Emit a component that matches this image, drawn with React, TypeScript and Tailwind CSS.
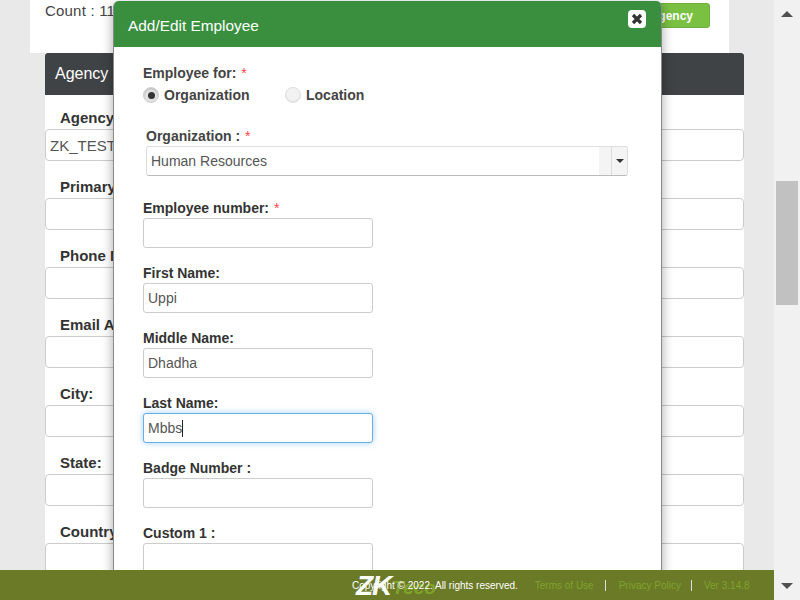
import React from "react";

const font = { fontFamily: '"Liberation Sans", Arial, sans-serif' };

function BgRow({ label, value }: { label: string; value?: string }) {
  return (
    <div className="h-[69px]">
      <div className="h-[25px] pl-[15px] pt-[14px] text-[15px] leading-[17px] font-bold text-[#333] whitespace-nowrap">{label}</div>
      <div className="h-[32px] mt-[9px] border border-[#ccc] rounded-[4px] bg-white pl-[4px] text-[15px] leading-[31px] text-[#555]">{value}</div>
    </div>
  );
}

function Field({ label, value, focus, caret }: { label: string; value?: string; focus?: boolean; caret?: boolean }) {
  return (
    <div className="h-[65px]">
      <div className="h-[18px] text-[14px] leading-[16px] font-bold text-[#333] whitespace-nowrap">{label}</div>
      <div className={`w-[230px] h-[30px] rounded-[3px] bg-white pl-[4px] text-[14px] leading-[28px] text-[#555] border flex items-center ${focus ? "border-[#66afe9] shadow-[0_0_6px_rgba(102,175,233,0.6)]" : "border-[#ccc]"}`}>
        {value}
        {caret && <span className="inline-block w-px h-[17px] bg-[#222]" />}
      </div>
    </div>
  );
}

function Radio({ checked, label, gap }: { checked?: boolean; label: string; gap: string }) {
  return (
    <div className={`flex items-center gap-[5px] ${gap}`}>
      <span className={`w-[16px] h-[16px] rounded-full border flex items-center justify-center ${checked ? "bg-[#e2e2e2] border-[#cfcfcf] shadow-[inset_0_1px_2px_rgba(0,0,0,0.2)]" : "bg-[#f2f2f2] border-[#ddd] shadow-[inset_0_-1px_1px_rgba(0,0,0,0.08)]"}`}>
        {checked && <span className="w-[7px] h-[7px] rounded-full bg-[#333]" />}
      </span>
      <span className="text-[14px] font-bold text-[#444]">{label}</span>
    </div>
  );
}

export default function App() {
  return (
    <div style={font} className="flex w-[800px] h-[600px] overflow-hidden bg-[#e9e9e9]">
      <div className="w-[774px] h-[600px] flex flex-col">
        <div className="relative h-[570px] overflow-hidden">
          <div className="ml-[30px] w-[699px] h-[53px] bg-white pl-[15px] flex justify-between">
            <div className="text-[15px] leading-[17px] pt-[2px] text-[#444] tracking-[0.2px]">Count : 11</div>
            <div className="mt-[3px] mr-[19px] h-[25px] w-[100px] rounded-[3px] bg-[#7ac143] border border-[#6fae3c] text-white text-[12px] leading-[24px] font-bold text-right pr-[16px]">Add Agency</div>
          </div>
          <div className="ml-[45px] w-[699px] bg-white">
            <div className="h-[42px] bg-[#3f4346] rounded-t-[3px] pl-[10px] text-white text-[16px] leading-[42px]">Agency Details</div>
            <BgRow label="Agency Name:" value="ZK_TEST" />
            <BgRow label="Primary Contact:" />
            <BgRow label="Phone Number:" />
            <BgRow label="Email Address:" />
            <BgRow label="City:" />
            <BgRow label="State:" />
            <BgRow label="Country:" />
          </div>

          <div className="absolute left-[113px] top-[1px] w-[549px] h-[640px] bg-white rounded-t-[6px] border-x border-[#8a8a8a] shadow-[0_3px_12px_rgba(0,0,0,0.35)]">
            <div className="relative h-[46px] bg-[#3a8f3f] rounded-t-[5px] pl-[14px] pt-[16px]">
              <span className="block text-white text-[15.4px] leading-[18px]">Add/Edit Employee</span>
              <span className="absolute right-[15px] top-[9px] w-[18px] h-[18px] bg-white rounded-[4px] flex items-center justify-center">
                <svg width="12" height="12" viewBox="0 0 12 12">
                  <path d="M2 2 L10 10 M10 2 L2 10" stroke="#333" strokeWidth="3.2" />
                </svg>
              </span>
            </div>
            <div className="pl-[29px]">
              <div className="pt-[18px] h-[38px] text-[14px] leading-[16px] font-bold text-[#444] whitespace-nowrap">
                Employee for: <span className="ml-[1px] text-[#f44] font-normal">*</span>
              </div>
              <div className="flex items-center h-[20px]">
                <Radio checked label="Organization" gap="w-[142px]" />
                <Radio label="Location" gap="" />
              </div>
              <div className="pl-[3px] pt-[23px]">
                <div className="h-[18px] text-[14px] leading-[16px] font-bold text-[#444] whitespace-nowrap">
                  Organization : <span className="ml-[1px] text-[#f44] font-normal">*</span>
                </div>
                <div className="w-[482px] h-[30px] flex rounded-[3px] border border-[#ddd] border-b-[#bbb] bg-white">
                  <div className="w-[452px] pl-[4px] text-[14px] leading-[28px] text-[#555]">Human Resources</div>
                  <div className="w-[12px] bg-[#f4f4f4]" />
                  <div className="flex-1 bg-[#f4f4f4] border-l border-[#ddd] flex items-center justify-center rounded-r-[3px]">
                    <span className="w-0 h-0 border-x-[4px] border-x-transparent border-t-[4px] border-t-[#333]" />
                  </div>
                </div>
              </div>
              <div className="pt-[24px]">
                <div className="h-[18px] text-[14px] leading-[16px] font-bold text-[#333] whitespace-nowrap">
                  Employee number: <span className="ml-[1px] text-[#f44] font-normal">*</span>
                </div>
                <div className="w-[230px] h-[30px] rounded-[3px] border border-[#ccc] bg-white mb-[17px]" />
                <Field label="First Name:" value="Uppi" />
                <Field label="Middle Name:" value="Dhadha" />
                <Field label="Last Name:" value="Mbbs" focus caret />
                <Field label="Badge Number :" />
                <Field label="Custom 1 :" />
              </div>
            </div>
          </div>
        </div>
        <footer className="relative h-[30px] bg-[#6b7a26] flex items-center text-[10px] pl-[352px] whitespace-nowrap">
          <div className="absolute left-[356px] top-[3px] flex items-end italic font-bold leading-[26px]">
            <span className="text-white text-[28px] tracking-[-1px]">ZK</span>
            <span className="text-[#7fa32c] text-[19px] ml-[1px] leading-[22px]">Teco</span>
          </div>
          <span className="relative text-white">Copyright © 2022. All rights reserved.</span>
          <span className="relative text-[#7fa32c] ml-[17px]">Terms of Use</span>
          <span className="relative w-px h-[11px] bg-[#ddd] ml-[11px]" />
          <span className="relative text-[#7fa32c] ml-[13px]">Privacy Policy</span>
          <span className="relative w-px h-[11px] bg-[#ddd] ml-[10px]" />
          <span className="relative text-[#7fa32c] ml-[12px]">Ver 3.14.8</span>
        </footer>
      </div>
      <div className="w-[26px] h-[600px] bg-[#f1f1f1] flex flex-col items-center pt-[11px] pb-[11px]">
        <span className="w-0 h-0 border-x-[6px] border-x-transparent border-b-[6px] border-b-[#505050]" />
        <div className="w-[22px] h-[124px] bg-[#c1c1c1] mt-[164px]" />
        <div className="flex-1" />
        <span className="w-0 h-0 border-x-[6px] border-x-transparent border-t-[6px] border-t-[#505050]" />
      </div>
    </div>
  );
}
